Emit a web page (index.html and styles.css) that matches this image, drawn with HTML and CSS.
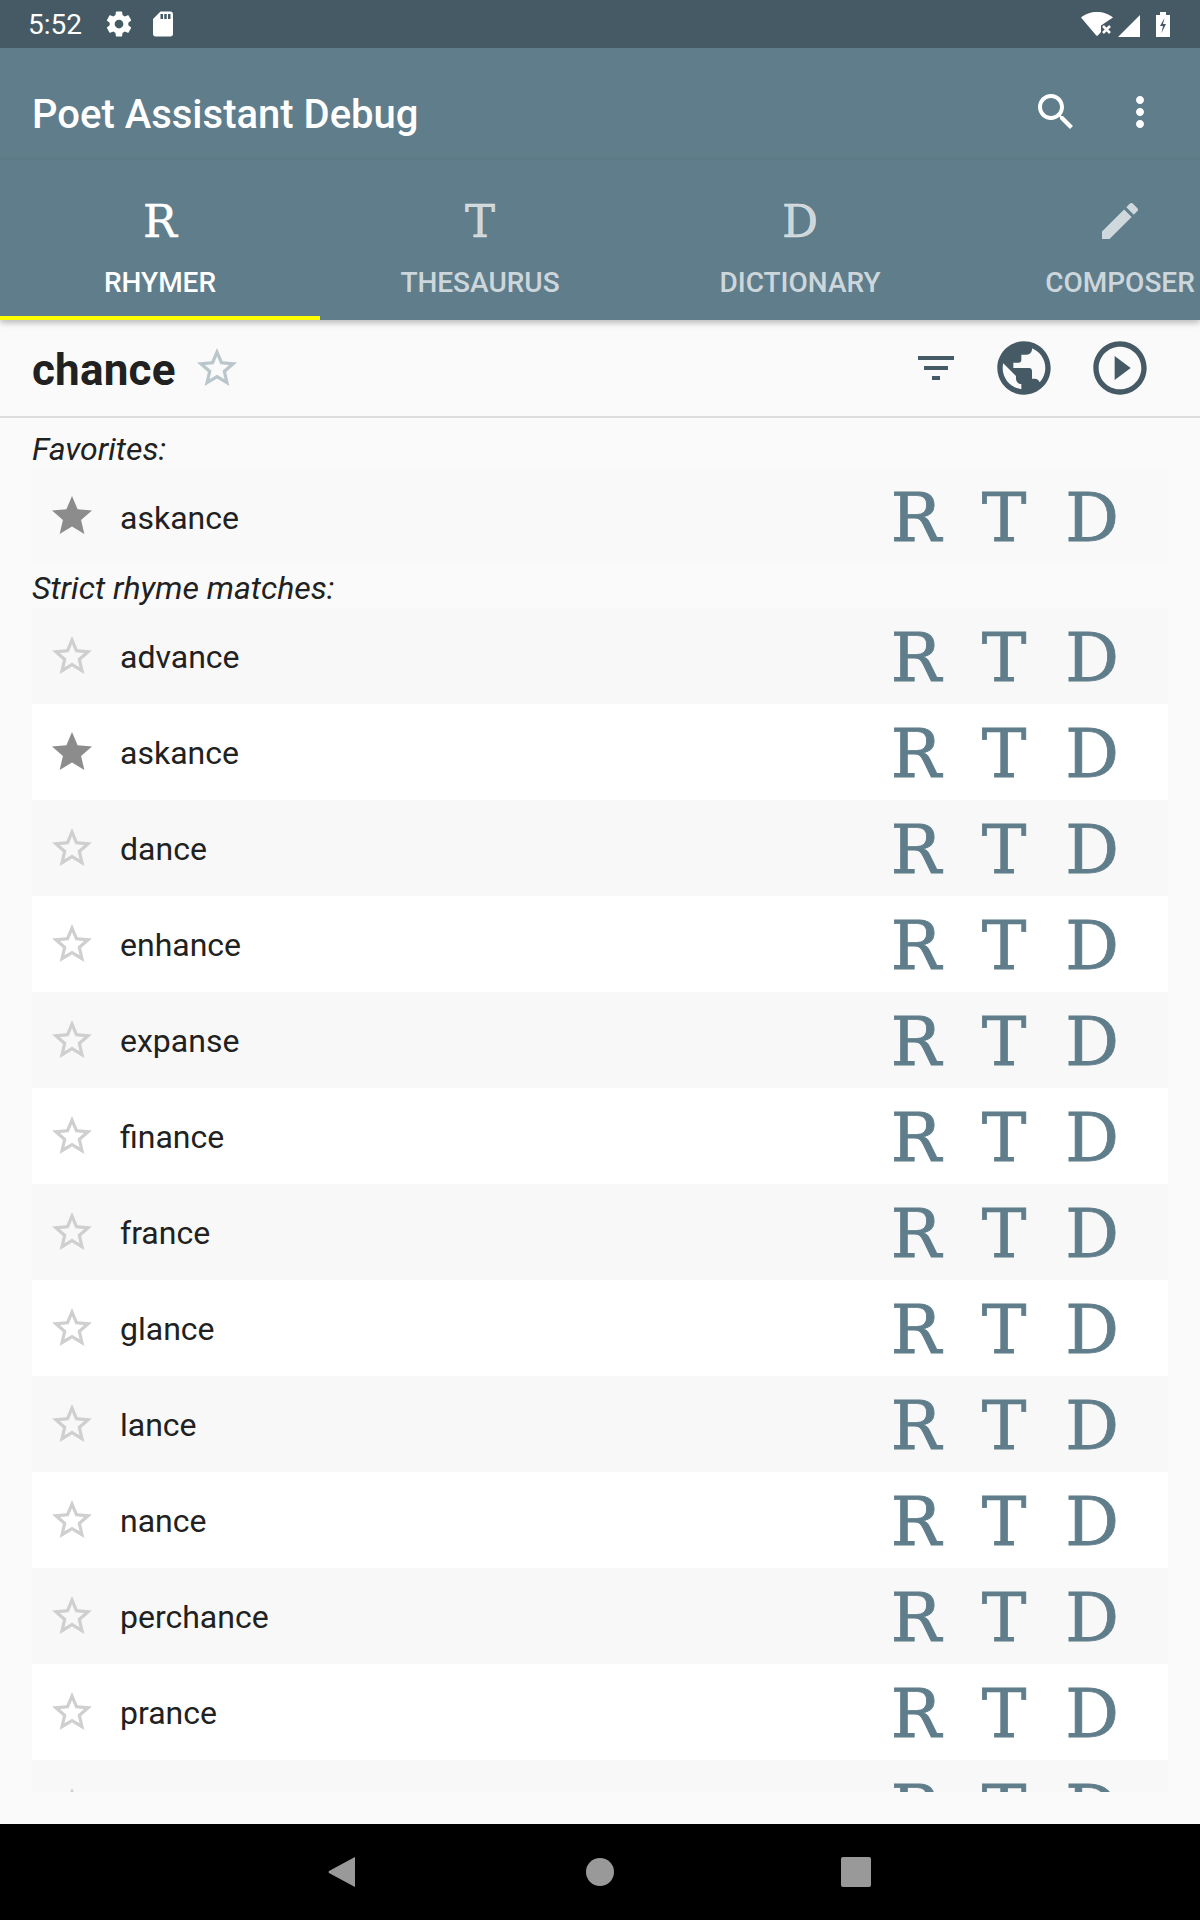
FILE: index.html
```html
<!DOCTYPE html>
<html lang="en">
  <head>
    <meta charset="utf-8" />
    <title>Poet Assistant Debug</title>
    <link rel="stylesheet" href="styles.css">
  </head>
  <body>
    <!-- Shared material icons -->
    <svg class="icon-defs" xmlns="http://www.w3.org/2000/svg">
      <symbol id="i-star" viewBox="0 0 24 24"><path d="M12 17.27L18.18 21l-1.64-7.03L22 9.24l-7.19-.61L12 2 9.19 8.63 2 9.24l5.46 4.73L5.82 21z"/></symbol>
      <symbol id="i-star-border" viewBox="0 0 24 24"><path d="M22 9.24l-7.19-.62L12 2 9.19 8.63 2 9.24l5.46 4.73L5.82 21 12 17.27 18.18 21l-1.63-7.03L22 9.24zM12 15.4l-3.76 2.27 1-4.28-3.32-2.88 4.38-.38L12 6.1l1.71 4.04 4.38.38-3.32 2.88 1 4.28L12 15.4z"/></symbol>
    </svg>

    <div class="status-bar">
      <span class="status-time">5:52</span>
      <svg class="status-icon" viewBox="0 0 24 24"><path d="M19.43 12.98c.04-.32.07-.64.07-.98s-.03-.66-.07-.98l2.11-1.65c.19-.15.24-.42.12-.64l-2-3.46c-.12-.22-.39-.3-.61-.22l-2.49 1c-.52-.4-1.08-.73-1.69-.98l-.38-2.65C14.46 2.18 14.25 2 14 2h-4c-.25 0-.46.18-.49.42l-.38 2.65c-.61.25-1.17.59-1.69.98l-2.49-1c-.23-.09-.49 0-.61.22l-2 3.46c-.13.22-.07.49.12.64l2.11 1.65c-.04.32-.07.65-.07.98s.03.66.07.98l-2.11 1.65c-.19.15-.24.42-.12.64l2 3.46c.12.22.39.3.61.22l2.49-1c.52.4 1.08.73 1.69.98l.38 2.65c.03.24.24.42.49.42h4c.25 0 .46-.18.49-.42l.38-2.65c.61-.25 1.17-.59 1.69-.98l2.49 1c.23.09.49 0 .61-.22l2-3.46c.12-.22.07-.49-.12-.64l-2.11-1.65zM12 15.5c-1.93 0-3.5-1.57-3.5-3.5s1.57-3.5 3.5-3.5 3.5 1.57 3.5 3.5-1.57 3.5-3.5 3.5z"/></svg>
      <svg class="status-icon" viewBox="0 0 24 24"><path d="M18 2h-8L4.02 8 4 20c0 1.1.9 2 2 2h12c1.1 0 2-.9 2-2V4c0-1.1-.9-2-2-2zm-6 6h-2V4h2v4zm3 0h-2V4h2v4zm3 0h-2V4h2v4z"/></svg>
      <div class="status-right">
        <svg class="status-wifi" viewBox="0 0 32 25"><path d="M0 5.500C4 2 10 0 16 0s12 2 16 5.500L20 13.500V20l-3 3.300q-1 1-2 0z"/><path class="status-x" d="M22 14l7 7m0-7l-7 7"/></svg>
        <svg class="status-signal" viewBox="0 0 22 22"><path d="M0 22h22V0z"/></svg>
        <svg class="status-battery" viewBox="0 0 14 25"><path fill-rule="evenodd" d="M4 0h6v3h4v22H0V3h4zM8.500 6L4 14h3l-1.500 7L10 12H7z"/></svg>
      </div>
    </div>

    <header class="app-bar">
      <h1 class="app-title">Poet Assistant Debug</h1>
      <svg class="bar-icon" viewBox="0 0 24 24"><path d="M15.5 14h-.79l-.28-.27C15.41 12.59 16 11.11 16 9.5 16 5.91 13.09 3 9.5 3S3 5.91 3 9.5 5.91 16 9.5 16c1.61 0 3.09-.59 4.23-1.57l.27.28v.79l5 4.99L20.49 19l-4.99-5zm-6 0C7.01 14 5 11.99 5 9.5S7.01 5 9.5 5 14 7.01 14 9.5 11.99 14 9.5 14z"/></svg>
      <svg class="bar-icon" viewBox="0 0 24 24"><path d="M12 8c1.1 0 2-.9 2-2s-.9-2-2-2-2 .9-2 2 .9 2 2 2zm0 2c-1.1 0-2 .9-2 2s.9 2 2 2 2-.9 2-2-.9-2-2-2zm0 6c-1.1 0-2 .9-2 2s.9 2 2 2 2-.9 2-2-.9-2-2-2z"/></svg>
    </header>

    <nav class="tabs">
      <div class="tab tab-active"><span class="tab-glyph">R</span><span class="tab-label">RHYMER</span></div>
      <div class="tab"><span class="tab-glyph">T</span><span class="tab-label">THESAURUS</span></div>
      <div class="tab"><span class="tab-glyph">D</span><span class="tab-label">DICTIONARY</span></div>
      <div class="tab">
        <svg class="tab-icon" viewBox="0 0 24 24"><path d="M3 17.25V21h3.750L17.810 9.940l-3.750-3.750L3 17.250zM20.710 7.040c.39-.39.39-1.020 0-1.410l-2.340-2.340c-.39-.39-1.020-.39-1.410 0l-1.830 1.830 3.750 3.750 1.830-1.830z"/></svg>
        <span class="tab-label">COMPOSER</span>
      </div>
    </nav>

    <section class="word-bar">
      <span class="word">chance</span>
      <svg class="word-star"><use href="#i-star-border"/></svg>
      <div class="word-actions">
        <svg class="filter-icon" viewBox="0 0 24 24"><path d="M10 18h4v-2h-4v2zM3 6v2h18V6H3zm3 7h12v-2H6v2z"/></svg>
        <svg class="word-icon" viewBox="0 0 24 24"><path d="M12 2C6.480 2 2 6.480 2 12s4.480 10 10 10 10-4.480 10-10S17.520 2 12 2zm-1 17.930c-3.950-.49-7-3.850-7-7.930 0-.62.08-1.210.21-1.790L9 15v1c0 1.100.9 2 2 2v1.930zm6.900-2.540c-.26-.81-1-1.390-1.900-1.390h-1v-3c0-.55-.45-1-1-1H8v-2h2c.55 0 1-.45 1-1V7h2c1.100 0 2-.9 2-2v-.41c2.930 1.190 5 4.060 5 7.410 0 2.080-.8 3.970-2.100 5.390z"/></svg>
        <svg class="word-icon" viewBox="0 0 24 24"><path d="M10 16.500l6-4.500-6-4.500v9zM12 2C6.480 2 2 6.480 2 12s4.480 10 10 10 10-4.480 10-10S17.520 2 12 2zm0 18c-4.410 0-8-3.590-8-8s3.590-8 8-8 8 3.590 8 8-3.590 8-8 8z"/></svg>
      </div>
    </section>

    <main class="results">
      <h2 class="group-title first">Favorites:</h2>
      <div class="row row-fav">
        <svg class="star star-on"><use href="#i-star"/></svg><span class="row-word">askance</span>
        <div class="row-links"><span>R</span><span>T</span><span>D</span></div>
      </div>

      <h2 class="group-title">Strict rhyme matches:</h2>
      <div class="row row-alt">
        <svg class="star"><use href="#i-star-border"/></svg><span class="row-word">advance</span>
        <div class="row-links"><span>R</span><span>T</span><span>D</span></div>
      </div>
      <div class="row">
        <svg class="star star-on"><use href="#i-star"/></svg><span class="row-word">askance</span>
        <div class="row-links"><span>R</span><span>T</span><span>D</span></div>
      </div>
      <div class="row row-alt">
        <svg class="star"><use href="#i-star-border"/></svg><span class="row-word">dance</span>
        <div class="row-links"><span>R</span><span>T</span><span>D</span></div>
      </div>
      <div class="row">
        <svg class="star"><use href="#i-star-border"/></svg><span class="row-word">enhance</span>
        <div class="row-links"><span>R</span><span>T</span><span>D</span></div>
      </div>
      <div class="row row-alt">
        <svg class="star"><use href="#i-star-border"/></svg><span class="row-word">expanse</span>
        <div class="row-links"><span>R</span><span>T</span><span>D</span></div>
      </div>
      <div class="row">
        <svg class="star"><use href="#i-star-border"/></svg><span class="row-word">finance</span>
        <div class="row-links"><span>R</span><span>T</span><span>D</span></div>
      </div>
      <div class="row row-alt">
        <svg class="star"><use href="#i-star-border"/></svg><span class="row-word">france</span>
        <div class="row-links"><span>R</span><span>T</span><span>D</span></div>
      </div>
      <div class="row">
        <svg class="star"><use href="#i-star-border"/></svg><span class="row-word">glance</span>
        <div class="row-links"><span>R</span><span>T</span><span>D</span></div>
      </div>
      <div class="row row-alt">
        <svg class="star"><use href="#i-star-border"/></svg><span class="row-word">lance</span>
        <div class="row-links"><span>R</span><span>T</span><span>D</span></div>
      </div>
      <div class="row">
        <svg class="star"><use href="#i-star-border"/></svg><span class="row-word">nance</span>
        <div class="row-links"><span>R</span><span>T</span><span>D</span></div>
      </div>
      <div class="row row-alt">
        <svg class="star"><use href="#i-star-border"/></svg><span class="row-word">perchance</span>
        <div class="row-links"><span>R</span><span>T</span><span>D</span></div>
      </div>
      <div class="row">
        <svg class="star"><use href="#i-star-border"/></svg><span class="row-word">prance</span>
        <div class="row-links"><span>R</span><span>T</span><span>D</span></div>
      </div>
      <div class="row row-alt">
        <svg class="star"><use href="#i-star-border"/></svg><span class="row-word">romance</span>
        <div class="row-links"><span>R</span><span>T</span><span>D</span></div>
      </div>
    </main>

    <div class="results-foot"></div>

    <footer class="nav-bar">
      <div class="nav-item"><svg class="nav-icon" viewBox="0 0 32 32"><path d="M27 2v28q0 1.500-1 .5L1 17q-1-1 0-2L26 1.500q1-1 1 .5z"/></svg></div>
      <div class="nav-item"><svg class="nav-icon" viewBox="0 0 32 32"><circle cx="16" cy="16" r="14"/></svg></div>
      <div class="nav-item"><svg class="nav-icon" viewBox="0 0 32 32"><rect x="1" y="1" width="30" height="30" rx="2"/></svg></div>
    </footer>
  </body>
</html>
```

FILE: styles.css
```css
/* Poet Assistant rhymer screen */
:root {
  --color-primary: #607d8b;
  --color-primary-dark: #455a64;
  --color-text: #212121;
}

html, body {
  height: 100%;
}

body {
  margin: 0;
  width: 1200px;
  height: 1920px;
  display: flex;
  flex-direction: column;
  overflow: hidden;
  background: #fafafa;
  color: var(--color-text);
  font-family: Roboto, sans-serif;
}

.icon-defs {
  display: none;
}

svg {
  fill: currentColor;
  display: block;
  flex-shrink: 0;
}

/* Status bar */
.status-bar {
  height: 48px;
  flex-shrink: 0;
  display: flex;
  align-items: center;
  padding: 0 30px 0 28px;
  background: var(--color-primary-dark);
  color: #fff;
}

.status-time {
  font-size: 28px;
  margin-right: 22px;
}

.status-icon {
  width: 30px;
  height: 30px;
  margin-right: 14px;
}

.status-right {
  margin-left: auto;
  display: flex;
  align-items: flex-end;
  height: 25px;
}

.status-wifi {
  width: 32px;
  height: 25px;
  margin-right: 5px;
}

.status-x {
  fill: none;
  stroke: #fff;
  stroke-width: 2.5;
}

.status-signal {
  width: 22px;
  height: 22px;
  margin-right: 16px;
}

.status-battery {
  width: 14px;
  height: 25px;
}

/* App bar */
.app-bar {
  height: 112px;
  box-sizing: border-box;
  flex-shrink: 0;
  display: flex;
  align-items: center;
  padding: 16px 36px 0 32px;
  background: var(--color-primary);
  color: #fff;
}

.app-title {
  flex: 1;
  margin: 0;
  padding-top: 5px;
  font-size: 40px;
  font-weight: 500;
}

.bar-icon {
  width: 48px;
  height: 48px;
  margin-left: 36px;
}

/* Tabs */
.tabs {
  height: 160px;
  flex-shrink: 0;
  display: flex;
  overflow: hidden;
  position: relative;
  background: var(--color-primary);
  color: rgba(255, 255, 255, 0.7);
  box-shadow: 0 3px 6px rgba(0, 0, 0, 0.25);
}

.tab {
  width: 320px;
  flex-shrink: 0;
  box-sizing: border-box;
  display: flex;
  flex-direction: column;
  align-items: center;
}

.tab-active {
  color: #fff;
  border-bottom: 4px solid #ffff00;
}

.tab-glyph {
  height: 48px;
  margin-top: 38px;
  font-family: "DejaVu Serif", serif;
  font-size: 45px;
  line-height: 48px;
  -webkit-text-stroke: 0.5px currentColor;
}

.tab-icon {
  width: 48px;
  height: 48px;
  margin-top: 37px;
}

.tab-label {
  margin-top: 20px;
  font-size: 28px;
  font-weight: 500;
  line-height: 33px;
}

.tab-icon + .tab-label {
  margin-top: 21px;
}

/* Word header */
.word-bar {
  height: 96px;
  flex-shrink: 0;
  display: flex;
  align-items: center;
  padding-left: 32px;
  border-bottom: 2px solid #dcdcdc;
}

.word {
  padding-top: 4px;
  font-size: 44px;
  font-weight: 700;
  letter-spacing: 0.2px;
}

.word-star {
  width: 48px;
  height: 48px;
  margin-left: 17px;
  color: #b9c6cc;
}

.word-actions {
  margin-left: auto;
  padding-right: 48px;
  display: flex;
  align-items: center;
  color: var(--color-primary-dark);
}

.filter-icon {
  width: 48px;
  height: 48px;
}

.word-icon {
  width: 64px;
  height: 64px;
  margin-left: 32px;
}

/* Results list */
.results {
  height: 1374px;
  flex-shrink: 0;
  overflow: hidden;
  padding: 0 32px;
}

.results-foot {
  height: 32px;
  flex-shrink: 0;
}

.group-title {
  height: 44px;
  margin: 0;
  font-size: 32px;
  font-style: italic;
  font-weight: 400;
  line-height: 48px;
}

.group-title.first {
  height: 50px;
  line-height: 62px;
}

.row {
  height: 96px;
  display: flex;
  align-items: center;
  padding: 0 32px 0 16px;
  background: #fff;
}

.row-fav {
  background: #f9f9f9;
}

.row-fav .row-word {
  padding-top: 4px;
}

.row-alt {
  background: #f8f8f8;
}

.star {
  width: 48px;
  height: 48px;
  color: #cfcfcf;
}

.star-on {
  color: #8c8c8c;
}

.row-word {
  margin-left: 24px;
  padding-top: 2px;
  font-size: 32px;
}

.row-links {
  margin-left: auto;
  display: flex;
  color: var(--color-primary);
  font-family: "DejaVu Serif", serif;
  font-size: 67px;
  line-height: 100px;
  height: 96px;
  -webkit-text-stroke: 0.8px currentColor;
}

.row-links span {
  width: 88px;
  text-align: center;
}

/* Navigation bar */
.nav-bar {
  height: 96px;
  flex-shrink: 0;
  display: flex;
  justify-content: center;
  align-items: center;
  background: #000;
  color: #999;
}

.nav-item {
  width: 256px;
  display: flex;
  justify-content: center;
}

.nav-icon {
  width: 32px;
  height: 32px;
}
```
